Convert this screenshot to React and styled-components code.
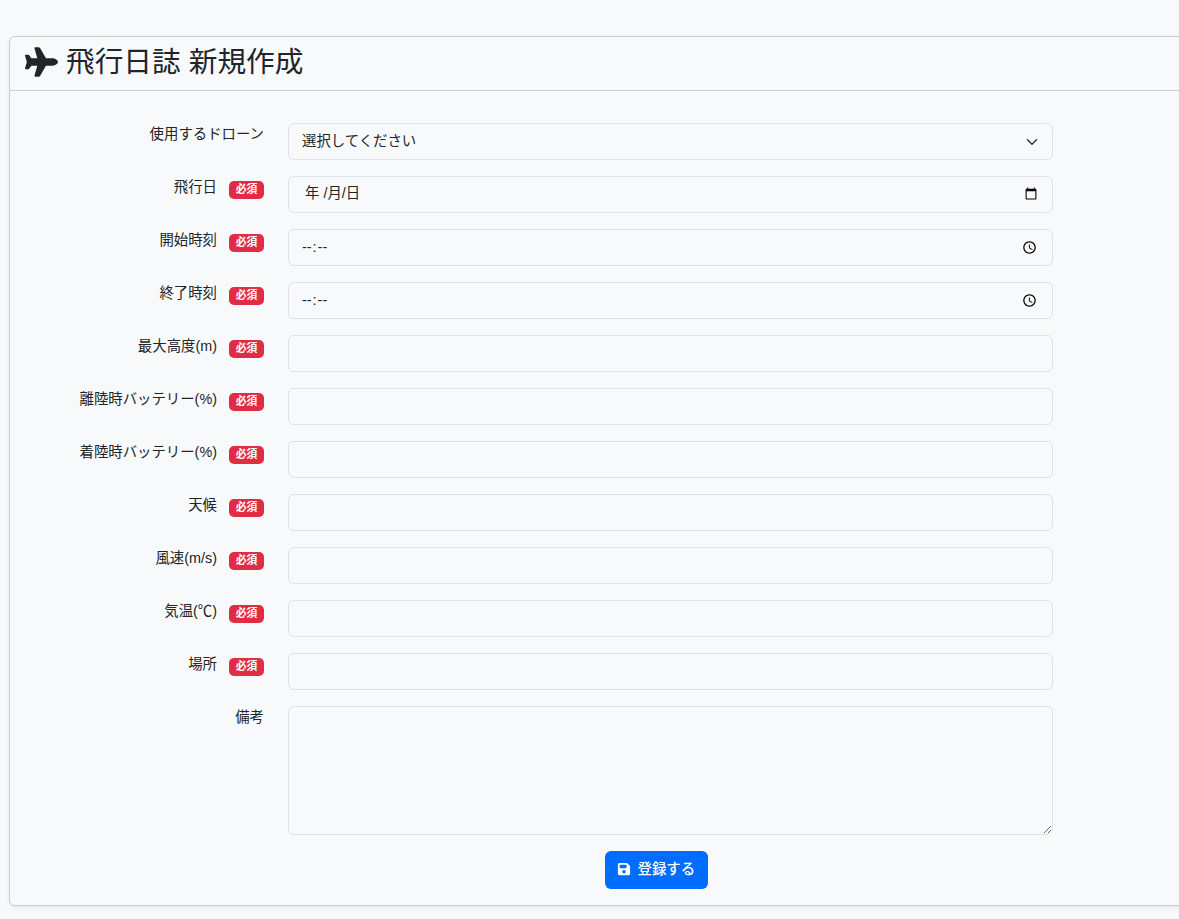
import React from "react";
import styled, { createGlobalStyle } from "styled-components";
import { FaFloppyDisk, FaPlane } from "react-icons/fa6";

const GlobalStyle = createGlobalStyle`
  html, body {
    margin: 0;
    background: #f8f9fb;
    overflow-x: hidden;
  }
  body {
    font-family: "Liberation Sans", "Noto Sans CJK JP", sans-serif;
    font-size: 14.4px;
    line-height: 21px;
    color: #212529;
  }
`;

const Page = styled.div`
  width: 1294px;
  padding: 36px 0 13px 9px;
`;

const Card = styled.section`
  border: 1px solid rgba(0, 0, 0, 0.175);
  border-radius: 6px;
  box-shadow: 0 2px 4px rgba(0, 0, 0, 0.075);
`;

const CardHeader = styled.header`
  display: flex;
  align-items: center;
  gap: 8px;
  height: 49px;
  padding: 0 15px 4px;
  border-bottom: 1px solid rgba(0, 0, 0, 0.175);
  box-sizing: content-box;
`;

const Title = styled.h1`
  margin: 0;
  font-size: 28.7px;
  font-weight: 400;
  line-height: 36px;
`;

const PlaneIcon = styled(FaPlane)`
  width: 33px;
  height: 30px;
`;

const Form = styled.form`
  display: flex;
  flex-direction: column;
  gap: 16px;
  padding: 32px 0 16px;
`;

const Row = styled.div`
  display: grid;
  grid-template-columns: 254px 765px;
  column-gap: 24px;
  align-items: start;
`;

const Label = styled.label`
  display: flex;
  justify-content: flex-end;
  gap: 12px;
  padding-top: 1px;
`;

const Badge = styled.span`
  width: 35px;
  height: 18.4px;
  margin-top: 3.5px;
  border-radius: 5px;
  background: #e02c44;
  color: #fff;
  font-size: 10.8px;
  font-weight: 700;
  line-height: 17px;
  text-align: center;
`;

const fieldBase = `
  display: block;
  width: 100%;
  box-sizing: border-box;
  border: 1px solid #dee2e6;
  border-radius: 6px;
  background-color: transparent;
  color: #212529;
  font: inherit;
  outline: none;
`;

const TextInput = styled.input`
  ${fieldBase}
  height: 37px;
  padding: 0 12px;
`;

const Select = styled.select`
  ${fieldBase}
  height: 37px;
  padding: 0 36px 1px 13px;
  appearance: none;
  background-image: url("data:image/svg+xml,%3csvg xmlns='http://www.w3.org/2000/svg' viewBox='0 0 16 16'%3e%3cpath fill='none' stroke='%23343a40' stroke-linecap='round' stroke-linejoin='round' stroke-width='2' d='m2 5 6 6 6-6'/%3e%3c/svg%3e");
  background-repeat: no-repeat;
  background-position: right 12px center;
  background-size: 16px 12px;
`;

const TimeInput = styled(TextInput)`
  &::-webkit-datetime-edit-ampm-field {
    display: none;
  }
  &::-webkit-calendar-picker-indicator {
    margin-right: 0;
  }
`;

const DateWrap = styled.div`
  position: relative;
`;

const DateInput = styled(TextInput)`
  &::-webkit-datetime-edit {
    opacity: 0;
  }
  &::-webkit-calendar-picker-indicator {
    margin-right: 0;
  }
`;

const DateHint = styled.span`
  position: absolute;
  left: 17px;
  top: 7px;
  pointer-events: none;
`;

const TextArea = styled.textarea`
  ${fieldBase}
  height: 129px;
  padding: 6px 12px;
  resize: vertical;
`;

const Actions = styled.div`
  display: flex;
  justify-content: center;
`;

const Submit = styled.button`
  display: flex;
  align-items: center;
  gap: 7px;
  width: 103px;
  height: 38px;
  padding: 0 0 2px 12px;
  border: 0;
  border-radius: 6px;
  background: #006dff;
  color: #fff;
  font: inherit;
  font-weight: 500;
`;

const fields = [
  { label: "飛行日", type: "date" },
  { label: "開始時刻", type: "time" },
  { label: "終了時刻", type: "time" },
  { label: "最大高度(m)" },
  { label: "離陸時バッテリー(%)" },
  { label: "着陸時バッテリー(%)" },
  { label: "天候" },
  { label: "風速(m/s)" },
  { label: "気温(℃)" },
  { label: "場所" },
];

function Control({ type }) {
  if (type === "date") {
    return (
      <DateWrap>
        <DateInput type="date" />
        <DateHint>年 /月/日</DateHint>
      </DateWrap>
    );
  }
  if (type === "time") return <TimeInput type="time" />;
  return <TextInput type="text" />;
}

export default function App() {
  return (
    <Page lang="ja">
      <GlobalStyle />
      <Card>
        <CardHeader>
          <PlaneIcon />
          <Title>飛行日誌 新規作成</Title>
        </CardHeader>
        <Form>
          <Row>
            <Label>使用するドローン</Label>
            <Select defaultValue="">
              <option value="">選択してください</option>
            </Select>
          </Row>
          {fields.map(field => (
            <Row key={field.label}>
              <Label>
                {field.label}
                <Badge>必須</Badge>
              </Label>
              <Control type={field.type} />
            </Row>
          ))}
          <Row>
            <Label>備考</Label>
            <TextArea />
          </Row>
          <Actions>
            <Submit type="button">
              <FaFloppyDisk size={14} />
              登録する
            </Submit>
          </Actions>
        </Form>
      </Card>
    </Page>
  );
}
